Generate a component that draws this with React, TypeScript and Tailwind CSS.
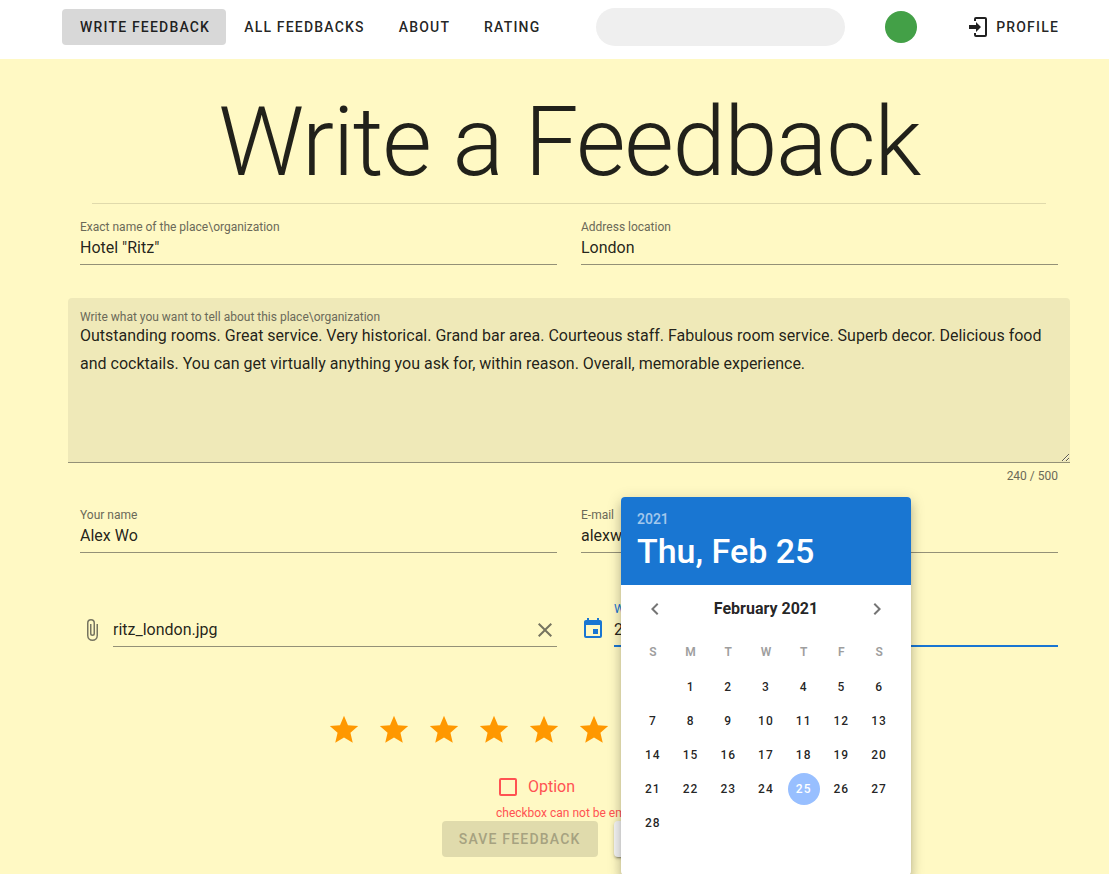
import React from "react";

const icons = {
  login:
    "M10,17V14H3V10H10V7L15,12L10,17M10,2H19A2,2 0 0,1 21,4V20A2,2 0 0,1 19,22H10A2,2 0 0,1 8,20V18H10V20H19V4H10V6H8V4A2,2 0 0,1 10,2Z",
  paperclip:
    "M16.5,6V17.5A4,4 0 0,1 12.5,21.5A4,4 0 0,1 8.5,17.5V5A2.5,2.5 0 0,1 11,2.5A2.5,2.5 0 0,1 13.5,5V15.5A1,1 0 0,1 12.5,16.5A1,1 0 0,1 11.5,15.5V6H10V15.5A2.5,2.5 0 0,0 12.5,18A2.5,2.5 0 0,0 15,15.5V5A4,4 0 0,0 11,1A4,4 0 0,0 7,5V17.5A5.5,5.5 0 0,0 12.5,23A5.5,5.5 0 0,0 18,17.5V6H16.5Z",
  close:
    "M19,6.41L17.59,5L12,10.59L6.41,5L5,6.41L10.59,12L5,17.59L6.41,19L12,13.41L17.59,19L19,17.59L13.41,12L19,6.41Z",
  calendar:
    "M19,19H5V8H19M16,1V3H8V1H6V3H5C3.89,3 3,3.89 3,5V19A2,2 0 0,0 5,21H19A2,2 0 0,0 21,19V5C21,3.89 20.1,3 19,3H18V1M17,12H12V17H17V12Z",
  star: "M12,17.27L18.18,21L16.54,13.97L22,9.24L14.81,8.62L12,2L9.19,8.62L2,9.24L7.45,13.97L5.82,21L12,17.27Z",
  left: "M15.41,16.58L10.83,12L15.41,7.41L14,6L8,12L14,18L15.41,16.58Z",
  right: "M8.59,16.58L13.17,12L8.59,7.41L10,6L16,12L10,18L8.59,16.58Z",
};

function Icon({ name, className = "size-6" }: { name: keyof typeof icons; className?: string }) {
  return (
    <svg viewBox="0 0 24 24" fill="currentColor" aria-hidden="true" className={`shrink-0 ${className}`}>
      <path d={icons[name]} />
    </svg>
  );
}

const buttonText = "pb-px text-sm font-medium uppercase tracking-[0.085em]";

function NavLink({ children, active = false }: { children: string; active?: boolean }) {
  return (
    <a
      href="#"
      className={`flex h-9 items-center whitespace-nowrap rounded pl-[18px] pr-4 ${buttonText} ${active ? "bg-[#d8d8d8]" : ""}`}
    >
      {children}
    </a>
  );
}

function Field({ id, label, value, type = "text" }: { id: string; label: string; value: string; type?: string }) {
  return (
    <div className="flex min-w-0 flex-1 flex-col border-b border-[#949177]">
      <label htmlFor={id} className="text-xs leading-4 text-[#6b6958]">
        {label}
      </label>
      <input
        id={id}
        type={type}
        defaultValue={value}
        className="mb-1 mt-px h-6 w-full bg-transparent text-base outline-none"
      />
    </div>
  );
}

function DatePicker() {
  const weekdays = ["S", "M", "T", "W", "T", "F", "S"];
  const cells: (number | null)[] = [null];
  for (let day = 1; day <= 28; day++) cells.push(day);
  while (cells.length < 42) cells.push(null);
  const weeks = Array.from({ length: 6 }, (_, i) => cells.slice(i * 7, i * 7 + 7));

  return (
    <div
      role="dialog"
      aria-label="Date"
      className="absolute -top-[103px] left-[7px] z-10 w-[290px] overflow-hidden rounded bg-white shadow-[0_5px_5px_-3px_rgba(0,0,0,0.2),0_8px_10px_1px_rgba(0,0,0,0.14),0_3px_14px_2px_rgba(0,0,0,0.12)]"
    >
      <div className="flex h-[88px] flex-col items-start bg-[#1976d2] px-4 pt-3 text-white">
        <button type="button" className="text-sm font-medium leading-5 opacity-60">
          2021
        </button>
        <button type="button" className="text-[34px] font-medium leading-[44px]">
          Thu, Feb 25
        </button>
      </div>
      <div className="flex h-12 items-center justify-between px-[22px]">
        <button type="button" aria-label="Previous month" className="text-[#757575]">
          <Icon name="left" />
        </button>
        <button type="button" className="text-base font-bold">
          February 2021
        </button>
        <button type="button" aria-label="Next month" className="text-[#757575]">
          <Icon name="right" />
        </button>
      </div>
      <div className="h-[242px] px-[13px]">
        <table className="w-full table-fixed border-collapse text-center text-xs">
          <thead>
            <tr className="h-[37px]">
              {weekdays.map((day, i) => (
                <th key={i} scope="col" className="p-0 font-semibold text-[#9e9e9e]">
                  {day}
                </th>
              ))}
            </tr>
          </thead>
          <tbody>
            {weeks.map((week, i) => (
              <tr key={i} className="h-[34px]">
                {week.map((day, j) => (
                  <td key={j} className="p-0">
                    {day && (
                      <button
                        type="button"
                        className={`size-8 rounded-full align-middle font-medium tracking-[0.085em] ${
                          day === 25 ? "bg-[#98bfff] text-white" : ""
                        }`}
                      >
                        {day}
                      </button>
                    )}
                  </td>
                ))}
              </tr>
            ))}
          </tbody>
        </table>
      </div>
    </div>
  );
}

export default function App() {
  return (
    <div className="h-screen overflow-hidden bg-[#fff9c4] font-[Roboto,sans-serif] text-black/87">
      <header className="flex h-[59px] items-center bg-white pb-[5px] pl-[62px] pr-[50px]">
        <nav className="flex">
          <NavLink active>Write Feedback</NavLink>
          <NavLink>All Feedbacks</NavLink>
          <NavLink>About</NavLink>
          <NavLink>Rating</NavLink>
        </nav>
        <input aria-label="Search" className="ml-10 h-[38px] min-w-0 flex-1 rounded-full bg-[#efefef] px-5 outline-none" />
        <span className="ml-10 size-8 shrink-0 rounded-full bg-[#43a047]" />
        <a href="#" className={`ml-[49px] flex h-9 items-center gap-1.5 ${buttonText}`}>
          <Icon name="login" />
          Profile
        </a>
      </header>

      <main className="pl-[68px] pr-[39px] pt-[35px]">
        <h1 className="text-center text-[96px] font-light leading-[96px] tracking-[-0.015em]">Write a Feedback</h1>
        <hr className="mx-6 mt-[13px] border-[#e0daac]" />

        <form>
          <div className="mt-[15px] flex gap-6 px-3">
            <Field id="place" label="Exact name of the place\organization" value={'Hotel "Ritz"'} />
            <Field id="address" label="Address location" value="London" />
          </div>

          <div className="mt-[33px] flex flex-col rounded-t border-b border-[#949177] bg-[#efe9b8] pt-[11px]">
            <label htmlFor="story" className="px-3 text-xs leading-4 text-[#6b6958]">
              Write what you want to tell about this place\organization
            </label>
            <textarea
              id="story"
              className="-mt-[3px] h-[140px] w-full resize-y bg-transparent px-3 text-base leading-7 outline-none"
              defaultValue="Outstanding rooms. Great service. Very historical. Grand bar area. Courteous staff. Fabulous room service. Superb decor. Delicious food and cocktails. You can get virtually anything you ask for, within reason. Overall, memorable experience."
            />
          </div>
          <p className="mt-[5px] px-3 text-right text-xs leading-4 text-[#6b6958]">240 / 500</p>

          <div className="mt-[23px] flex gap-6 px-3">
            <Field id="name" label="Your name" value="Alex Wo" />
            <Field id="email" type="email" label="E-mail" value="alexwo@gmail.com" />
          </div>

          <div className="mt-[47px] flex gap-6 px-3">
            <div className="flex min-w-0 flex-1 gap-[9px]">
              <span className="pt-[18px] text-[#767460]">
                <Icon name="paperclip" />
              </span>
              <div className="flex h-[47px] min-w-0 flex-1 items-end border-b border-[#949177] pb-1">
                <input
                  aria-label="Photo"
                  readOnly
                  defaultValue="ritz_london.jpg"
                  className="h-6 min-w-0 flex-1 bg-transparent text-base outline-none"
                />
                <button type="button" aria-label="Clear photo" className="text-[#767460]">
                  <Icon name="close" />
                </button>
              </div>
            </div>
            <div className="flex min-w-0 flex-1 gap-[9px]">
              <span className="pt-[17px] text-[#1976d2]">
                <Icon name="calendar" />
              </span>
              <div className="relative h-[47px] min-w-0 flex-1 border-b-2 border-[#1976d2] pt-px">
                <label htmlFor="visit" className="block text-xs leading-4 text-[#1976d2]">
                  When
                </label>
                <input
                  id="visit"
                  defaultValue="2021-02-25"
                  className="mt-px h-6 w-full bg-transparent text-base outline-none"
                />
                <DatePicker />
              </div>
            </div>
          </div>

          <div className="mt-[66px] flex justify-center gap-4 text-[#ff9800]">
            {Array.from({ length: 10 }, (_, i) => (
              <button key={i} type="button" aria-label={`${i + 1} stars`} className="size-[34px]">
                <Icon name="star" className="size-[34px]" />
              </button>
            ))}
          </div>

          <div className="mt-7 flex flex-col items-center text-[#ff5252]">
            <div className="flex w-[146px] flex-col">
              <label className="flex h-6 items-center gap-[11px] pl-[3px]">
                <input type="checkbox" className="size-[18px] appearance-none rounded-xs border-2 border-[#ff5252]" />
                Option
              </label>
              <p className="mt-1.5 whitespace-nowrap text-xs leading-4">checkbox can not be empty</p>
            </div>
          </div>

          <div className="flex justify-center gap-4">
            <button type="submit" disabled className={`h-9 rounded bg-[#e0dbac] px-[17px] text-[#a6a280] ${buttonText}`}>
              Save feedback
            </button>
            <button
              type="reset"
              className={`h-9 rounded bg-[#f5f5f5] px-[17px] shadow-[0_3px_1px_-2px_rgba(0,0,0,0.2),0_2px_2px_0_rgba(0,0,0,0.14),0_1px_5px_0_rgba(0,0,0,0.12)] ${buttonText}`}
            >
              Clear
            </button>
          </div>
        </form>
      </main>
    </div>
  );
}
